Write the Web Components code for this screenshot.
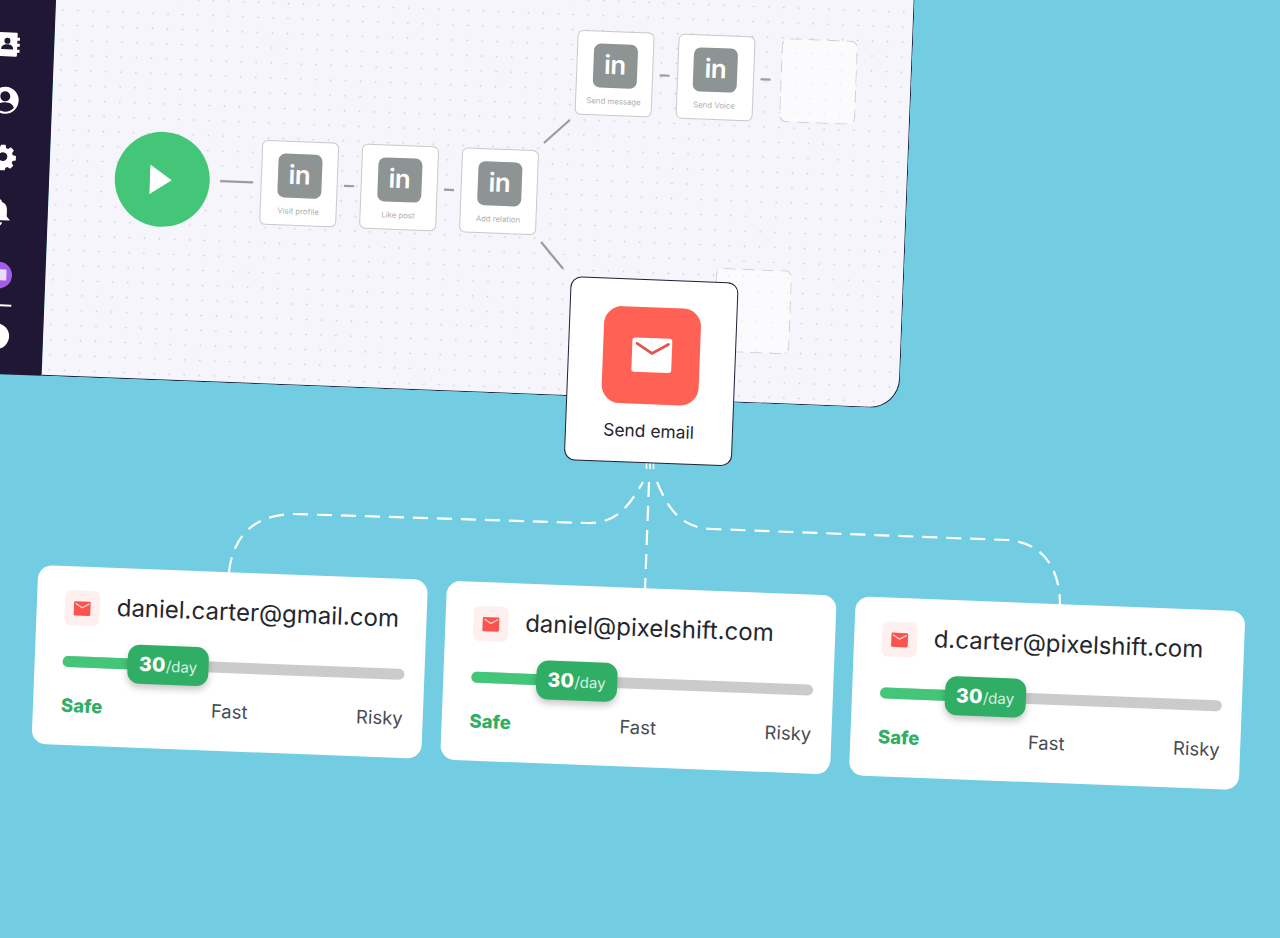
<!DOCTYPE html>
<html>
<head>
<meta charset="utf-8">
<title>Flow</title>
<style>
html, body { margin: 0; height: 100%; overflow: hidden; background: #72cde2; }
body { font-family: "Inter", "Liberation Sans", sans-serif; position: relative; }
</style>
</head>
<body>
<dash-links></dash-links>
<flow-scene>
  <flow-sidebar slot="side"></flow-sidebar>
  <flow-canvas slot="canvas">
    <flow-play style="--x:112.500;--y:233"></flow-play>
    <flow-node style="--x:250;--y:232">Visit profile</flow-node>
    <flow-node style="--x:350;--y:232">Like post</flow-node>
    <flow-node style="--x:450;--y:232">Add relation</flow-node>
    <flow-node style="--x:561;--y:109.500">Send message</flow-node>
    <flow-node style="--x:661.500;--y:109.500">Send Voice</flow-node>
    <flow-ghost style="--x:764.5;--y:110"></flow-ghost>
    <flow-ghost style="--x:708;--y:342"></flow-ghost>
    <email-node style="--x:608.7;--y:405.7">Send email</email-node>
  </flow-canvas>
  <account-card slot="cards">daniel.carter@gmail.com</account-card>
  <account-card slot="cards">daniel@pixelshift.com</account-card>
  <account-card slot="cards">d.carter@pixelshift.com</account-card>
</flow-scene>

<script>
const mailIcon = (body, flap) => `
  <svg viewBox="0 0 48 40" width="100%" height="100%" style="display:block" aria-hidden="true">
    <rect x="3" y="2" width="42" height="36" rx="3" fill="${body}"/>
    <path d="M8 8 L24 18 L41 8" fill="none" stroke="${flap}" stroke-width="3" stroke-linecap="round" stroke-linejoin="round"/>
  </svg>`;

// each element below sits on the free canvas through --x / --y
const placed = `
  :host {
    position: absolute;
    left: calc(var(--x) * 1px);
    top: calc(var(--y) * 1px);
    transform: translate(-50%, -50%);
  }
`;

class DashLinks extends HTMLElement {
  constructor() {
    super();
    this.attachShadow({ mode: "open" }).innerHTML = `
      <style>
        :host { position: absolute; inset: 0; display: block; }
        svg { display: block; }
        path { fill: none; stroke: #fff; stroke-width: 2.2; stroke-dasharray: 15 9; }
      </style>
      <svg width="1280" height="938">
        <path d="M229 572 C232 545 246 515 293 514 L587 523 C620 524 632 500 643 482"/>
        <path d="M649 482 L645 590"/>
        <path d="M657 482 C668 508 680 528 712 529 L1007 540 C1040 542 1060 565 1060 605"/>
        <path d="M646.5 463 V469 M650 463 V469 M653.5 463 V469" style="stroke-dasharray:none;stroke-width:1.6"/>
      </svg>`;
  }
}

class FlowScene extends HTMLElement {
  constructor() {
    super();
    this.attachShadow({ mode: "open" }).innerHTML = `
      <style>
        :host {
          position: absolute;
          left: 0;
          top: 0;
          width: 1400px;
          display: flex;
          flex-direction: column;
          transform: rotate(2.2deg);
          transform-origin: 0 0;
        }
        .panel { display: flex; height: 433.500px; width: 974px; margin: -60px 0 0 -60px; }
        .cards { display: flex; gap: 18.8px; margin: 189.500px 0 0 60px; }
      </style>
      <div class="panel">
        <slot name="side"></slot>
        <slot name="canvas"></slot>
      </div>
      <div class="cards"><slot name="cards"></slot></div>`;
  }
}

class FlowSidebar extends HTMLElement {
  constructor() {
    super();
    this.attachShadow({ mode: "open" }).innerHTML = `
      <style>
        :host {
          flex: 0 0 116px;
          box-sizing: border-box;
          background: #1f1733;
          display: flex;
          flex-direction: column;
          align-items: center;
          padding: 90px 18px 0 39px;
        }
        svg { display: block; width: 28px; height: 28px; flex: none; margin-bottom: 28px; }
        svg.last { margin-bottom: 0; }
        .alert { margin-top: 7px; margin-bottom: 0; }
        hr { width: 28px; height: 1.5px; background: #fff; border: 0; margin: 15px 0 16px; flex: none; }
      </style>
      <svg viewBox="0 0 28 28">
        <path fill="#fff" d="M0 2h23a1 1 0 0 1 1 1v4h2.500v3H24v3h2.500v3H24v3h2.500v3H24v3a1 1 0 0 1-1 1H0z"/>
        <circle cx="14" cy="10.500" r="3" fill="#1f1733"/>
        <path fill="#1f1733" d="M8 19c0-3.500 2.500-5 6-5s6 1.500 6 5z"/>
      </svg>
      <svg viewBox="0 0 28 28">
        <circle cx="14" cy="14" r="13.500" fill="#fff"/>
        <circle cx="14" cy="10" r="5" fill="#1f1733"/>
        <path fill="#1f1733" d="M5 21.500c1-4 4.500-5.500 9-5.500s8 1.500 9 5.500c-2.300 2.500-5.500 4-9 4s-6.700-1.500-9-4z"/>
      </svg>
      <svg viewBox="0 0 28 28">
        <path fill="#fff" fill-rule="evenodd" d="M11.500 1h5l.8 3.600 2.300 1 3.100-2 3.500 3.500-2 3.100 1 2.300 3.600.8v5l-3.600.8-1 2.300 2 3.100-3.500 3.500-3.100-2-2.300 1-.8 3.600h-5l-.8-3.600-2.300-1-3.100 2-3.500-3.500 2-3.100-1-2.300L-1 17v-5l3.600-.8 1-2.300-2-3.100 3.500-3.500 3.100 2 2.300-1zM14 9.500a5 5 0 1 0 0 10 5 5 0 0 0 0-10z" transform="translate(1.600 1.600) scale(.88)"/>
      </svg>
      <svg viewBox="0 0 28 28" style="margin-left:-4px">
        <path fill="#fff" d="M14 1c1.500 0 2.500 1 2.500 2.500C20.500 5 22 8 22 12v6l3.500 4H2.500L6 18v-6c0-4 1.500-7 5.500-8.500C11.500 2 12.500 1 14 1z"/>
        <path fill="#fff" d="M10.500 24h7a3.500 3.500 0 0 1-7 0z"/>
      </svg>
      <svg class="alert" viewBox="0 0 28 28">
        <circle cx="14" cy="14" r="13.500" fill="#a45ee5"/>
        <path fill="#e9dcf8" d="M7 8h14a1 1 0 0 1 1 1v9a1 1 0 0 1-1 1h-9l-4 3.500V19H7a1 1 0 0 1-1-1V9a1 1 0 0 1 1-1z"/>
      </svg>
      <hr>
      <svg class="last" viewBox="0 0 28 28">
        <circle cx="14" cy="14" r="13" fill="#fff"/>
        <rect x="13" y="8" width="2.500" height="11" fill="#b9b9c2"/>
      </svg>`;
  }
}

class FlowCanvas extends HTMLElement {
  constructor() {
    super();
    this.attachShadow({ mode: "open" }).innerHTML = `
      <style>
        :host {
          flex: 1;
          position: relative;
          box-sizing: border-box;
          background-color: #f6f5fc;
          background-image: radial-gradient(circle, #c9c9d2 0.7px, transparent 1.1px);
          background-size: 15px 15px;
          border-right: 1.2px solid #1b2540;
          border-bottom: 1.2px solid #1b2540;
          border-bottom-right-radius: 30px;
        }
        svg { position: absolute; left: 0; top: 0; overflow: visible; }
        line { stroke: #9a9c9f; stroke-width: 2.2; }
      </style>
      <svg width="857" height="433">
        <line x1="171" y1="232.500" x2="204" y2="232.500"/>
        <line x1="295" y1="232.500" x2="305" y2="232.500"/>
        <line x1="395" y1="232.500" x2="405" y2="232.500"/>
        <line x1="493" y1="182" x2="518" y2="158"/>
        <line x1="494" y1="281" x2="517" y2="307"/>
        <line x1="606" y1="110" x2="616" y2="110"/>
        <line x1="707" y1="110" x2="717" y2="110"/>
      </svg>
      <slot></slot>`;
  }
}

class FlowPlay extends HTMLElement {
  constructor() {
    super();
    this.attachShadow({ mode: "open" }).innerHTML = `
      <style>
        ${placed}
        :host {
          width: 95px;
          height: 95px;
          border-radius: 50%;
          background: #43c677;
          display: flex;
          align-items: center;
          justify-content: center;
        }
        svg { display: block; margin-right: 3px; }
      </style>
      <svg width="22" height="30" viewBox="0 0 22 30"><path d="M0 0 L22 15 L0 30z" fill="#fff"/></svg>`;
  }
}

class FlowNode extends HTMLElement {
  constructor() {
    super();
    this.attachShadow({ mode: "open" }).innerHTML = `
      <style>
        ${placed}
        :host {
          box-sizing: border-box;
          width: 77px;
          height: 85px;
          background: #fff;
          border: 1px solid #c9c9cd;
          border-radius: 6px;
          display: flex;
          flex-direction: column;
          align-items: center;
          padding-top: 12px;
          color: #aeb0b3;
          font-size: 7.800px;
        }
        .logo {
          width: 44px;
          height: 44px;
          border-radius: 7px;
          background: #8e9393;
          color: #fff;
          font-weight: 600;
          font-size: 26px;
          line-height: 42px;
          text-align: center;
          letter-spacing: -0.5px;
          margin-bottom: 8px;
        }
      </style>
      <div class="logo">in</div>
      <slot></slot>`;
  }
}

class FlowGhost extends HTMLElement {
  constructor() {
    super();
    this.attachShadow({ mode: "open" }).innerHTML = `
      <style>
        ${placed}
        :host { width: 76px; height: 84px; }
        svg { display: block; }
      </style>
      <svg width="76" height="84">
        <rect x="0.5" y="0.5" width="75" height="83" rx="7" fill="#fff" fill-opacity=".55"
          stroke="#cfcfd3" stroke-dasharray="12 7"/>
      </svg>`;
  }
}

class EmailNode extends HTMLElement {
  constructor() {
    super();
    this.attachShadow({ mode: "open" }).innerHTML = `
      <style>
        ${placed}
        :host {
          box-sizing: border-box;
          width: 168px;
          height: 184px;
          background: #fff;
          border: 1.500px solid #1c2236;
          border-radius: 11px;
          display: flex;
          flex-direction: column;
          align-items: center;
          padding-top: 27px;
          color: #25272e;
          font-size: 17.400px;
        }
        .tile {
          width: 97px;
          height: 97px;
          border-radius: 18px;
          background: #ff6154;
          display: flex;
          align-items: center;
          justify-content: center;
          margin-bottom: 16px;
        }
        .glyph { width: 46px; height: 38px; }
      </style>
      <div class="tile"><div class="glyph">${mailIcon("#fff", "#e2574c")}</div></div>
      <slot></slot>`;
  }
}

class AccountCard extends HTMLElement {
  constructor() {
    super();
    this.attachShadow({ mode: "open" }).innerHTML = `
      <style>
        :host {
          flex: 0 0 390px;
          min-width: 0;
          box-sizing: border-box;
          height: 179px;
          background: #fff;
          border-radius: 14px;
          padding: 24px 20px 0 28px;
          display: flex;
          flex-direction: column;
          color: #25272e;
        }
        .head { display: flex; align-items: center; gap: 17px; height: 35px; font-size: 24px; white-space: nowrap; }
        .name { margin-top: -4px; }
        .tile {
          width: 35px;
          height: 35px;
          border-radius: 6px;
          background: #fdf0ee;
          display: flex;
          align-items: center;
          justify-content: center;
          flex: none;
        }
        .glyph { width: 19px; height: 16px; }
        .slider {
          position: relative;
          height: 11px;
          margin-top: 31px;
          border-radius: 6px;
          background: #cbcbcb;
        }
        .fill { width: 100px; height: 100%; border-radius: 6px 0 0 6px; background: #43c677; }
        .thumb {
          position: absolute;
          left: 65px;
          top: -14px;
          box-sizing: border-box;
          width: 81px;
          height: 39px;
          border-radius: 12px;
          background: #30ae66;
          color: #fff;
          box-shadow: 0 4px 7px rgba(0, 0, 0, .22);
          display: flex;
          align-items: baseline;
          justify-content: center;
          line-height: 38px;
          font-size: 15px;
        }
        .thumb b { font-size: 19.500px; font-weight: 800; letter-spacing: 0.3px; }
        .thumb span { color: #d9f1e3; }
        .labels {
          display: flex;
          justify-content: space-between;
          margin-top: 28px;
          font-size: 18.500px;
          line-height: 20px;
          color: #4a4c52;
        }
        .labels .safe { color: #30ae66; font-weight: 800; }
      </style>
      <div class="head">
        <div class="tile"><div class="glyph">${mailIcon("#f9544f", "#fdd8d4")}</div></div>
        <div class="name"><slot></slot></div>
      </div>
      <div class="slider">
        <div class="fill"></div>
        <div class="thumb"><b>30</b><span>/day</span></div>
      </div>
      <div class="labels">
        <span class="safe">Safe</span>
        <span>Fast</span>
        <span>Risky</span>
      </div>`;
  }
}

customElements.define("dash-links", DashLinks);
customElements.define("flow-scene", FlowScene);
customElements.define("flow-sidebar", FlowSidebar);
customElements.define("flow-canvas", FlowCanvas);
customElements.define("flow-play", FlowPlay);
customElements.define("flow-node", FlowNode);
customElements.define("flow-ghost", FlowGhost);
customElements.define("email-node", EmailNode);
customElements.define("account-card", AccountCard);
</script>
</body>
</html>
